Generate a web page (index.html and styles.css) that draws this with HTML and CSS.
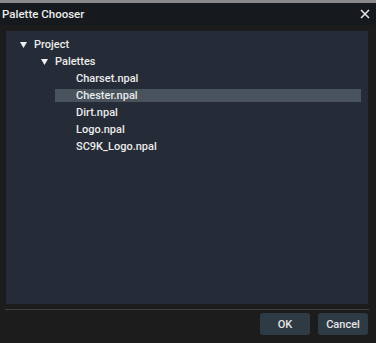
FILE: index.html
```html
<!DOCTYPE html>
<html lang="en">
<head>
    <meta charset="UTF-8">
    <title>Palette Chooser</title>
    <link rel="stylesheet" href="styles.css">
</head>
<body>
    <div class="window">
        <div class="titlebar">
            <span class="title">Palette Chooser</span>
            <svg class="close" width="10" height="10" viewBox="0 0 10 10">
                <path d="M1 1L9 9M9 1L1 9" stroke="#e8e8e8" stroke-width="1.5"/>
            </svg>
        </div>

        <div class="content">
            <div class="tree">
                <div class="node level-0">
                    <svg class="arrow" width="7" height="6" viewBox="0 0 7 6"><path d="M0 0H7L3.5 6Z" fill="#f0f0f0"/></svg>
                    <span>Project</span>
                </div>
                <div class="node level-1">
                    <svg class="arrow" width="7" height="6" viewBox="0 0 7 6"><path d="M0 0H7L3.5 6Z" fill="#f0f0f0"/></svg>
                    <span>Palettes</span>
                </div>
                <div class="node leaf">Charset.npal</div>
                <div class="node leaf selected">Chester.npal</div>
                <div class="node leaf">Dirt.npal</div>
                <div class="node leaf">Logo.npal</div>
                <div class="node leaf">SC9K_Logo.npal</div>
            </div>
        </div>

        <div class="separator"></div>

        <div class="footer">
            <button class="btn">OK</button>
            <button class="btn">Cancel</button>
        </div>
    </div>
</body>
</html>
```

FILE: styles.css
```css
body {
    margin: 0;
    font-family: Roboto, "Noto Sans", sans-serif;
    background-color: #1c1c1c;
}

.window {
    height: 343px;
    box-sizing: border-box;
    border-top: 3px solid #8a8a8a;
    background-color: #1c1c1c;
    display: flex;
    flex-direction: column;
}

.titlebar {
    height: 22px;
    background-color: #161a1e;
    display: flex;
    align-items: center;
    justify-content: space-between;
    padding: 0 6px 0 2px;
}

.title {
    color: #ececec;
    font-size: 11.5px;
    font-weight: 500;
}

.close {
    display: block;
}

.content {
    padding: 6px 8px 0 6px;
}

.tree {
    height: 273px;
    background-color: #262c37;
    padding-top: 7px;
    box-sizing: border-box;
    display: flex;
    flex-direction: column;
    gap: 4px;
}

.node {
    height: 13px;
    display: flex;
    align-items: center;
    color: #ebebeb;
    font-size: 11px;
    font-weight: 500;
}

.arrow {
    display: block;
    margin-right: 7px;
}

.level-0 {
    padding-left: 14px;
}

.level-1 {
    padding-left: 35px;
}

.leaf {
    margin: 0 7px 0 49px;
    padding-left: 21px;
}

.selected {
    background-color: #48535d;
}

.separator {
    height: 1px;
    margin: 5px 7px 0 5px;
    background-color: #3c4146;
}

.footer {
    display: flex;
    justify-content: flex-end;
    gap: 8px;
    padding: 3px 8px 0 0;
}

.btn {
    width: 50px;
    height: 22px;
    border: none;
    border-radius: 3px;
    background-color: #2e3a44;
    color: #e6e6e6;
    font-family: Roboto, "Noto Sans", sans-serif;
    font-size: 11px;
    font-weight: 500;
    padding: 0;
}
```
